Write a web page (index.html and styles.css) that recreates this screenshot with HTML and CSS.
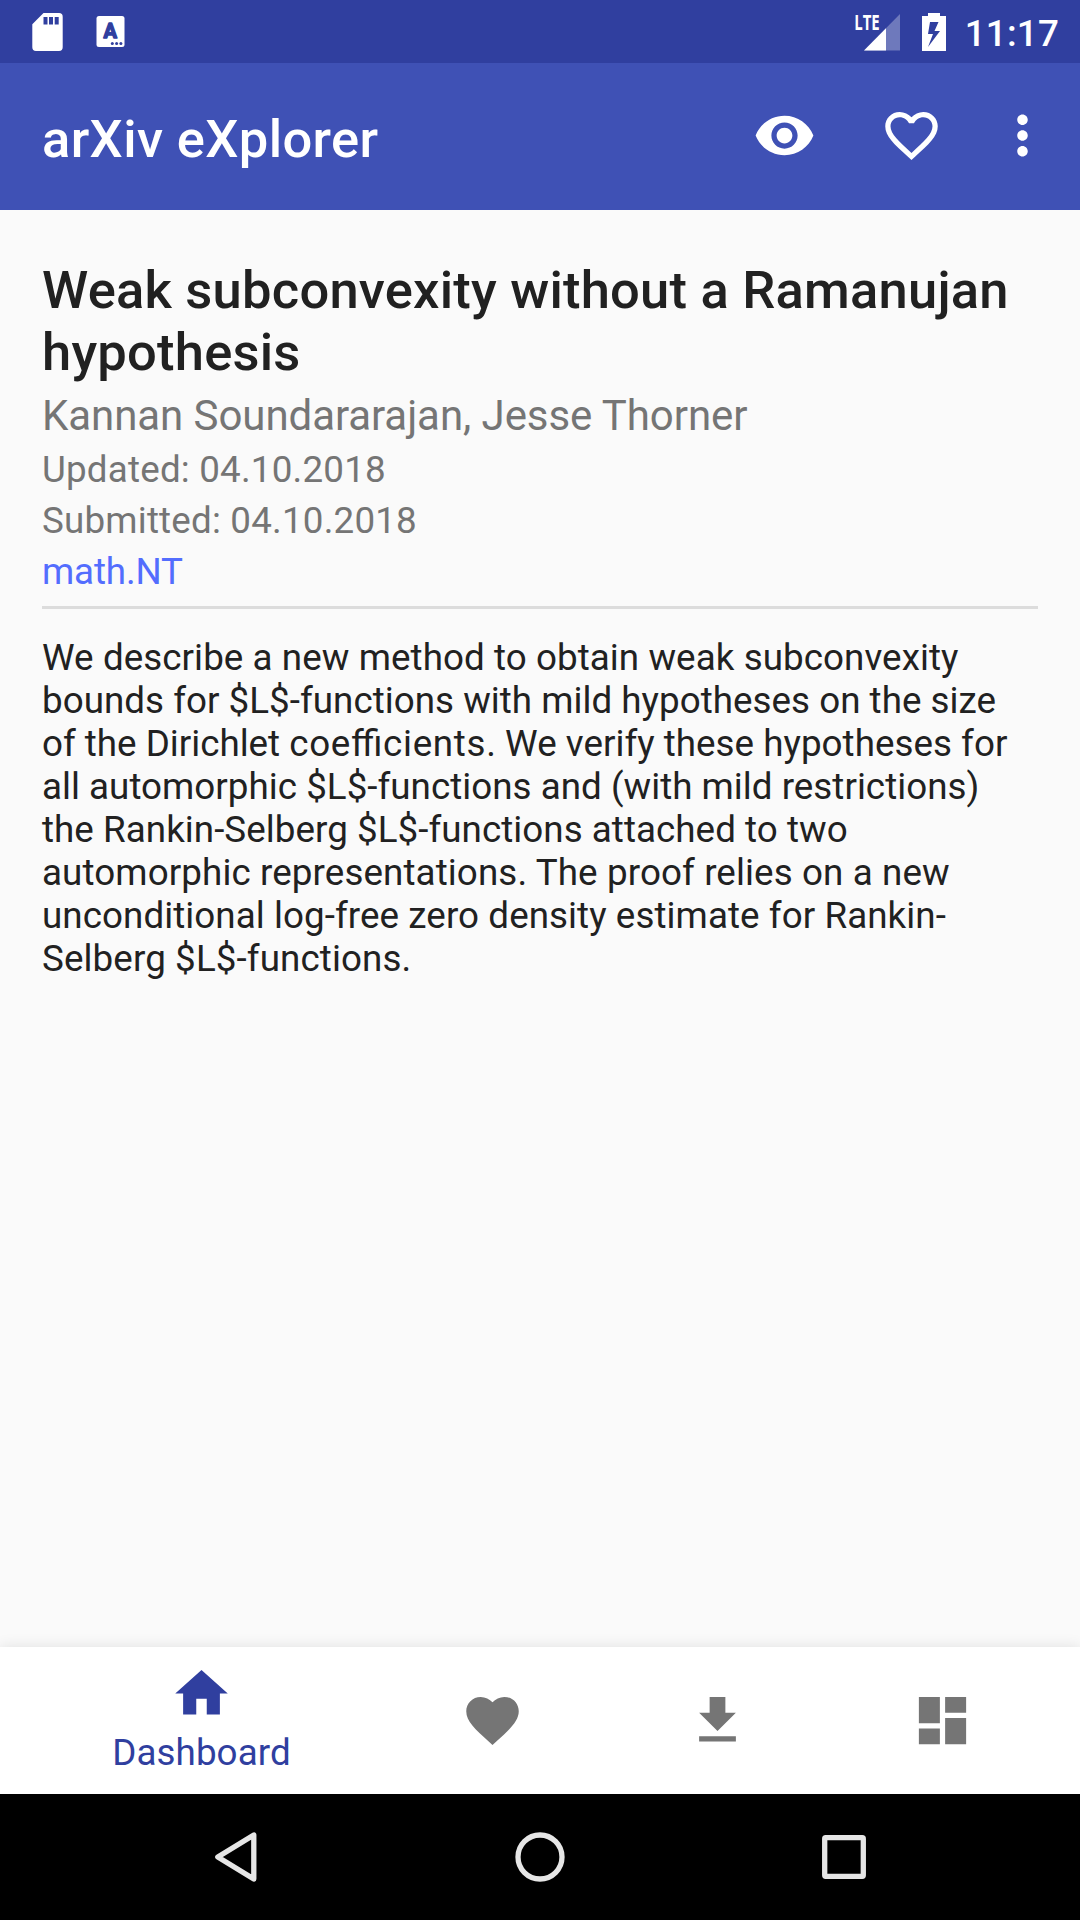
FILE: index.html
```html
<!DOCTYPE html>
<html lang="en">
<head>
<meta charset="utf-8">
<title>arXiv eXplorer</title>
<link rel="stylesheet" href="styles.css">
</head>
<body>
<div class="screen">
  <div class="status-bar">
    <div class="status-group">
      <svg class="icon-sd" viewBox="0 0 31 38"><path fill="#fff" fill-rule="evenodd" d="M11.500 0H27a3.700 3.700 0 0 1 3.700 3.700V34.300A3.700 3.700 0 0 1 27 38H4A3.700 3.700 0 0 1 .300 34.300V11.200zM11.500 4v7.500h4V4zM17 4v7.500h4V4zM22.700 4v7.500h4V4z"/></svg>
      <svg class="icon-keyboard" viewBox="0 0 29 31"><rect x=".5" width="28" height="31" rx="2.500" fill="#fff"/><text class="keyboard-letter" x="14.300" y="22" text-anchor="middle">A</text><g fill="#303f9f"><circle cx="16.300" cy="27.500" r="1.500"/><circle cx="20.600" cy="27.500" r="1.500"/><circle cx="24.900" cy="27.500" r="1.500"/></g></svg>
    </div>
    <div class="status-group">
      <svg class="icon-signal" viewBox="0 0 46 38"><path d="M45 1V37.500H9z" fill="#fff" opacity=".3"/><path d="M31 15.200V37.500H9z" fill="#fff"/><text class="lte" x="-.8" y="17" textLength="25.500" lengthAdjust="spacingAndGlyphs">LTE</text></svg>
      <svg class="icon-battery" viewBox="0 0 24 38"><path fill="#fff" fill-rule="evenodd" d="M6 0H18V3H24V38H0V3H6zM8 9L6 21H11L6 34L18 18H12.500L16.500 9z"/></svg>
      <span class="clock">11:17</span>
    </div>
  </div>

  <header class="toolbar">
    <h1 class="app-title">arXiv eXplorer</h1>
    <div class="actions">
      <svg class="icon" viewBox="0 0 24 24"><path d="M12 4.500C7 4.500 2.730 7.610 1 12c1.730 4.390 6 7.500 11 7.500s9.270-3.110 11-7.500c-1.730-4.390-6-7.500-11-7.500zM12 17c-2.760 0-5-2.240-5-5s2.240-5 5-5 5 2.240 5 5-2.240 5-5 5zm0-8c-1.660 0-3 1.340-3 3s1.340 3 3 3 3-1.340 3-3-1.340-3-3-3z"/></svg>
      <svg class="icon" viewBox="0 0 24 24"><path d="M16.500 3c-1.740 0-3.410.81-4.500 2.090C10.910 3.810 9.240 3 7.500 3 4.420 3 2 5.420 2 8.500c0 3.780 3.400 6.860 8.550 11.540L12 21.350l1.450-1.320C18.600 15.360 22 12.280 22 8.500 22 5.420 19.580 3 16.500 3zm-4.400 15.550l-.1.100-.1-.1C7.140 14.240 4 11.390 4 8.500 4 6.500 5.500 5 7.500 5c1.540 0 3.040.99 3.570 2.360h1.870C13.460 5.990 14.960 5 16.500 5c2 0 3.500 1.500 3.500 3.500 0 2.890-3.140 5.740-7.900 10.050z"/></svg>
      <svg class="icon icon-more" viewBox="0 0 24 24"><path d="M12 8c1.100 0 2-.9 2-2s-.9-2-2-2-2 .9-2 2 .9 2 2 2zm0 2c-1.100 0-2 .9-2 2s.9 2 2 2 2-.9 2-2-.9-2-2-2zm0 6c-1.100 0-2 .9-2 2s.9 2 2 2 2-.9 2-2-.9-2-2-2z"/></svg>
    </div>
  </header>

  <main class="article">
    <div class="article-head">
      <h2 class="title">Weak subconvexity without a Ramanujan hypothesis</h2>
      <p class="authors">Kannan Soundararajan, Jesse Thorner</p>
      <p class="meta">Updated: 04.10.2018</p>
      <p class="meta">Submitted: 04.10.2018</p>
      <p class="meta category">math.NT</p>
    </div>
    <p class="abstract"><span class="track-3">We describe a new method to obtain weak subconvexity</span><br><span class="track-1">bounds for $L$-functions with mild hypotheses on the size</span><br>of the Dirichlet <span class="track-wide">coefficients</span><span class="track-1">. We verify these hypotheses for</span><br><span class="track-1">all automorphic $L$-functions and (with mild restrictions)</span><br><span class="track-2">the Rankin-Selberg $L$-functions attached to two</span><br><span class="track-4">automorphic representations. The proof relies on a new</span><br><span class="track-3">unconditional log-free zero density estimate for Rankin-</span><br><span class="track-4">Selberg $L$-functions.</span></p>
  </main>

  <nav class="tabs">
    <div class="tab tab-active">
      <svg class="icon" viewBox="0 0 24 24"><path d="M10 20v-6h4v6h5v-8h3L12 3 2 12h3v8z"/></svg>
      <span class="tab-label">Dashboard</span>
    </div>
    <div class="tab"><svg class="icon" viewBox="0 0 24 24"><path d="M12 21.350l-1.450-1.320C5.400 15.360 2 12.280 2 8.500 2 5.420 4.420 3 7.500 3c1.740 0 3.410.81 4.500 2.090C13.090 3.810 14.760 3 16.500 3 19.580 3 22 5.420 22 8.500c0 3.780-3.400 6.860-8.550 11.540L12 21.350z"/></svg></div>
    <div class="tab"><svg class="icon" viewBox="0 0 24 24"><path d="M19 9h-4V3H9v6H5l7 7 7-7zM5 18v2h14v-2H5z"/></svg></div>
    <div class="tab"><svg class="icon" viewBox="0 0 24 24"><path d="M3 13h8V3H3v10zm0 8h8v-6H3v6zm10 0h8V11h-8v10zm0-18v6h8V3h-8z"/></svg></div>
  </nav>

  <div class="system-nav">
    <svg class="system-icon" viewBox="0 0 60 60"><path d="M47.800 8V52L11.800 30z"/></svg>
    <svg class="system-icon" viewBox="0 0 60 60"><circle cx="30" cy="30" r="22"/></svg>
    <svg class="system-icon" viewBox="0 0 60 60"><rect x="10.700" y="10.700" width="38.600" height="38.600" rx="1"/></svg>
  </div>
</div>
</body>
</html>
```
FILE: styles.css
```css
* {
  box-sizing: border-box;
}

body,
h1,
h2,
p {
  margin: 0;
}

body {
  font-family: Roboto, "Liberation Sans", sans-serif;
  color: #212121;
}

svg {
  display: block;
  flex: none;
}

.screen {
  display: flex;
  flex-direction: column;
  width: 1080px;
  height: 1920px;
  overflow: hidden;
  background: #fafafa;
}

.status-bar {
  display: flex;
  justify-content: space-between;
  height: 63px;
  padding: 0 21px 0 32px;
  background: #303f9f;
  color: #fff;
}

.status-group {
  display: flex;
  align-items: center;
}

.icon-sd {
  width: 31px;
  height: 38px;
}

.icon-keyboard {
  width: 29px;
  height: 31px;
  margin-left: 33px;
}

.keyboard-letter {
  font-size: 20px;
  font-weight: 700;
  fill: #303f9f;
  stroke: #303f9f;
  stroke-width: 1.4;
  stroke-linejoin: round;
}

.icon-signal {
  width: 46px;
  height: 38px;
  overflow: visible;
}

.lte {
  font-family: "Open Sans", sans-serif;
  font-size: 22px;
  font-weight: 700;
  fill: #fff;
}

.icon-battery {
  width: 24px;
  height: 38px;
  margin: 0 19px 0 21px;
}

.clock {
  font-size: 36.75px;
  font-weight: 500;
  line-height: 43px;
  letter-spacing: 0.2px;
  padding-top: 4px;
}

.toolbar {
  display: flex;
  align-items: center;
  justify-content: space-between;
  height: 147px;
  padding: 0 26px 0 42px;
  background: #3f51b5;
  color: #fff;
}

.app-title {
  font-size: 52.5px;
  font-weight: 500;
  line-height: 62px;
  letter-spacing: 0.38px;
  padding-top: 5px;
}

.actions {
  display: flex;
  gap: 64px;
  padding-bottom: 2px;
}

.icon {
  width: 63px;
  height: 63px;
  fill: currentColor;
}

.icon-more {
  margin-left: -16px;
}

.article {
  flex: 1;
  padding: 49px 42px 0;
}

.article-head {
  display: flex;
  flex-direction: column;
  gap: 8px;
  padding-bottom: 13px;
  border-bottom: 3px solid #dcdcdc;
}

.title {
  font-size: 52.5px;
  font-weight: 500;
  line-height: 62px;
  letter-spacing: 0.22px;
}

.authors {
  font-size: 42px;
  line-height: 49px;
  letter-spacing: -0.07px;
  color: #757575;
}

.meta {
  font-size: 36.75px;
  line-height: 43px;
  letter-spacing: 0.2px;
  color: #757575;
}

.category {
  letter-spacing: -0.15px;
  color: #536dfe;
}

.abstract {
  margin-top: 27px;
  font-size: 36.75px;
  line-height: 43px;
  white-space: nowrap;
}

.track-1 {
  letter-spacing: 0.03px;
}

.track-2 {
  letter-spacing: 0.05px;
}

.track-3 {
  letter-spacing: 0.075px;
}

.track-4 {
  letter-spacing: 0.11px;
}

.track-wide {
  letter-spacing: 0.7px;
  font-feature-settings: "liga" 1;
}

.tabs {
  display: flex;
  height: 147px;
  padding: 0 24.5px;
  background: #fff;
  box-shadow: 0 0 14px rgba(0, 0, 0, 0.11);
}

.tab {
  display: flex;
  flex-direction: column;
  align-items: center;
  flex: 1;
  padding-top: 42px;
  color: #757575;
}

.tab-active {
  flex: 0 0 355px;
  padding-top: 15px;
  padding-right: 1px;
  color: #303f9f;
}

.tab-label {
  margin-top: 6px;
  font-size: 36.75px;
  line-height: 43px;
  letter-spacing: 0.08px;
}

.system-nav {
  display: flex;
  align-items: center;
  justify-content: center;
  gap: 244px;
  height: 126px;
  background: #000;
}

.system-icon {
  width: 60px;
  height: 60px;
  fill: none;
  stroke: #e6e6e6;
  stroke-width: 5.3;
  stroke-linejoin: round;
}
```
